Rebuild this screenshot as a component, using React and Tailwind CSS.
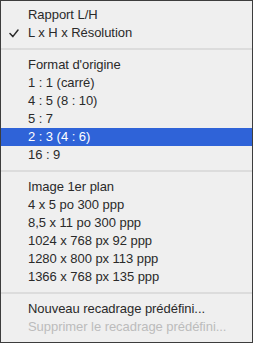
const groups = [
  [
    { label: "Rapport L/H" },
    { label: "L x H x Résolution", checked: true },
  ],
  [
    { label: "Format d'origine" },
    { label: "1 : 1 (carré)" },
    { label: "4 : 5 (8 : 10)" },
    { label: "5 : 7" },
    { label: "2 : 3 (4 : 6)", active: true },
    { label: "16 : 9" },
  ],
  [
    { label: "Image 1er plan" },
    { label: "4 x 5 po 300 ppp" },
    { label: "8,5 x 11 po 300 ppp" },
    { label: "1024 x 768 px 92 ppp" },
    { label: "1280 x 800 px 113 ppp" },
    { label: "1366 x 768 px 135 ppp" },
  ],
  [
    { label: "Nouveau recadrage prédéfini..." },
    { label: "Supprimer le recadrage prédéfini...", disabled: true },
  ],
];

function Item({ item }) {
  const color = item.active
    ? "bg-[#2f63d8] text-white"
    : item.disabled
    ? "text-[#bcbcbc]"
    : "text-[#2a2a2a]";
  return (
    <div className={`relative flex h-[18px] items-center pl-[27px] ${color}`}>
      {item.checked && (
        <svg
          className="absolute left-[8px] top-[5px]"
          width="10"
          height="9"
          viewBox="0 0 10 9"
          fill="none"
        >
          <path d="M1 4.6 L3.8 7.6 L9 1" stroke="#2a2a2a" strokeWidth="1.5" strokeLinecap="round" strokeLinejoin="round" />
        </svg>
      )}
      <span>{item.label}</span>
    </div>
  );
}

export default function App() {
  return (
    <div
      className="h-[343px] w-[253px] border border-[#3d3d3d] bg-[#efefef] py-[5px] text-[13px] leading-[18px] tracking-[-0.05px]"
      style={{ fontFamily: '"Liberation Sans", Arial, sans-serif' }}
    >
      {groups.map((group, i) => (
        <div key={i}>
          {i > 0 && <div className="my-[6px] h-[2px] bg-[#dcdcdc]" />}
          {group.map((item) => (
            <Item key={item.label} item={item} />
          ))}
        </div>
      ))}
    </div>
  );
}
